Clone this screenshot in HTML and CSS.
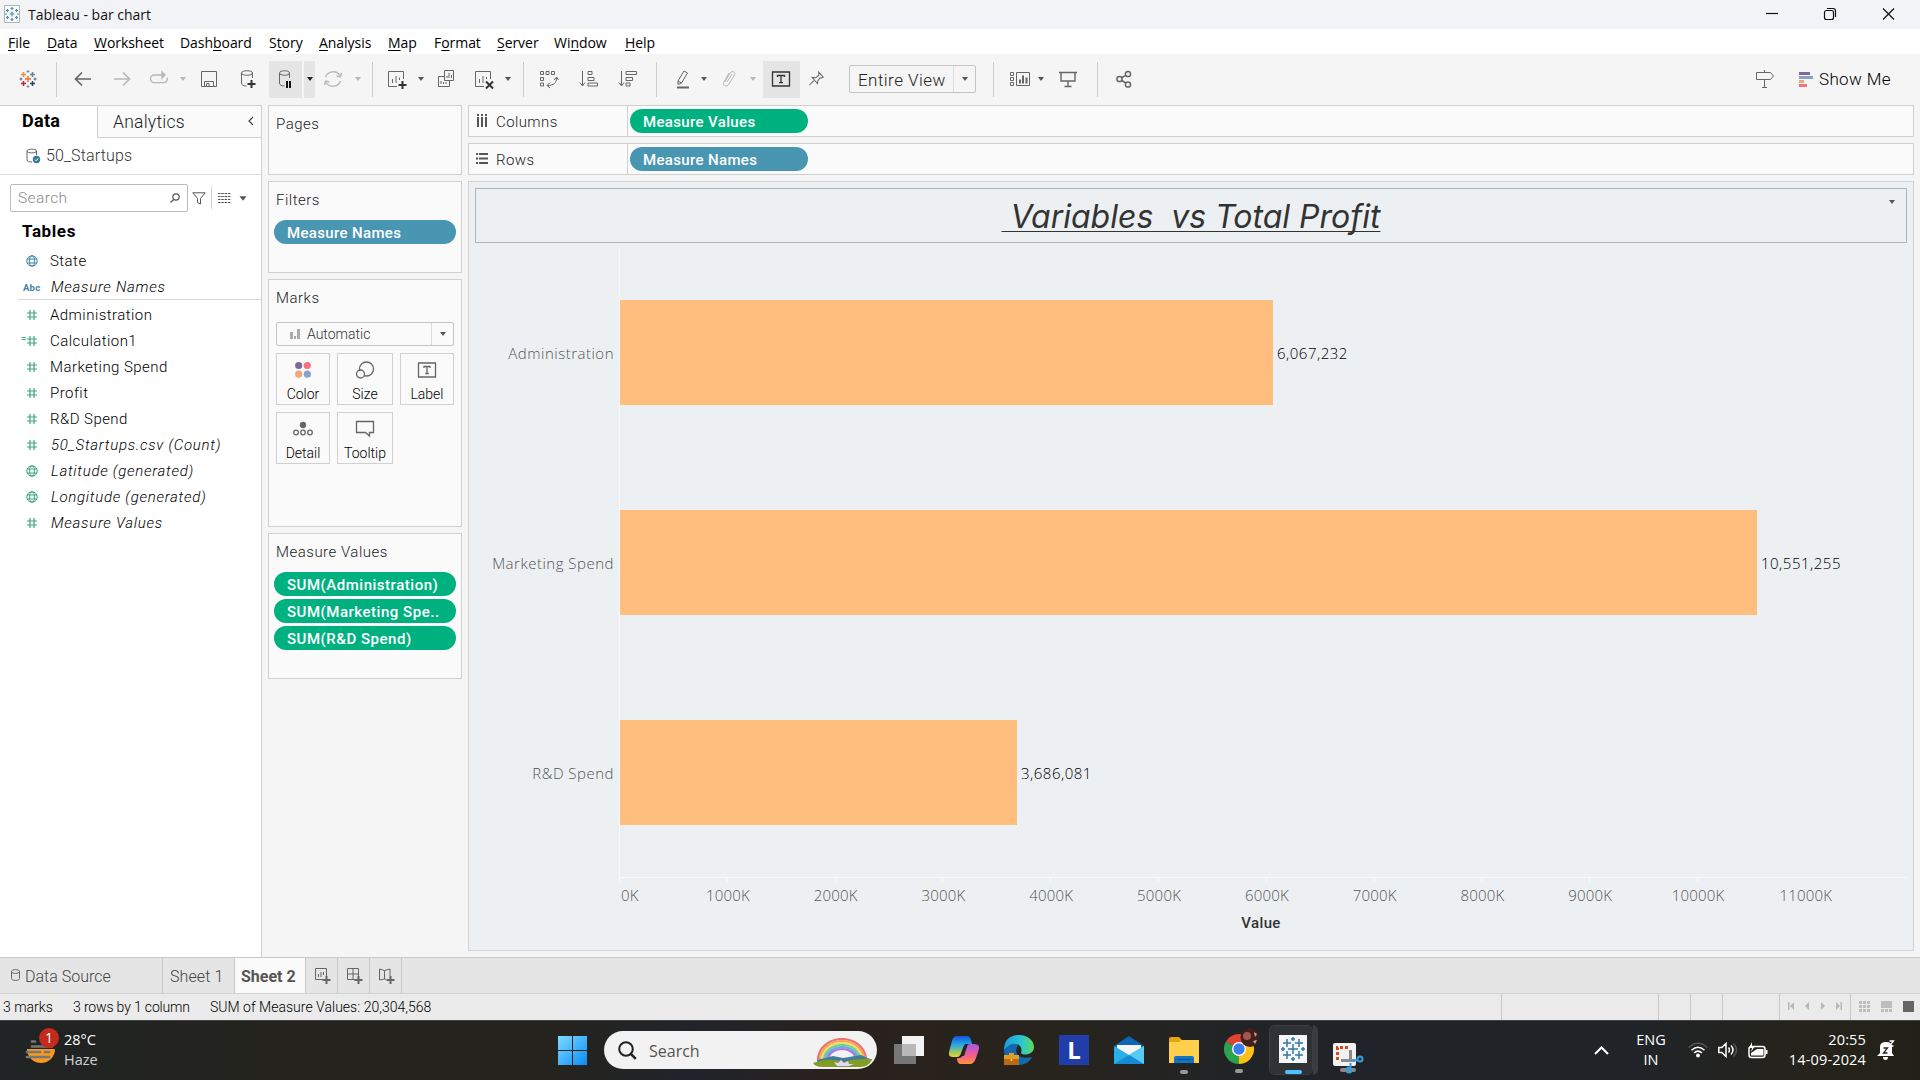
FILE: index.html
```html
<!DOCTYPE html>
<html lang="en">
<head>
<meta charset="utf-8">
<title>Tableau - bar chart</title>
<link rel="stylesheet" href="styles.css">
</head>
<body>
<svg width="0" height="0" class="defs">
  <defs>
    <symbol id="hash" viewBox="0 0 12 12"><path d="M1 4h10M1 8h10M4 1v10M8 1v10" stroke="currentColor" stroke-width="1.2" fill="none"/></symbol>
    <symbol id="globe" viewBox="0 0 12 12"><g stroke="currentColor" fill="none"><circle cx="6" cy="6" r="5.2"/><ellipse cx="6" cy="6" rx="2.4" ry="5.2"/><path d="M1 4h10M1 8h10"/></g></symbol>
    <symbol id="caret" viewBox="0 0 8 6"><path d="M1 1h6L4 5z" fill="currentColor"/></symbol>
  </defs>
</svg>

<header class="titlebar">
  <svg class="app-icon" width="16" height="18" viewBox="0 0 16 18"><path fill="#f8f8f8" stroke="#b5b5b5" d="M.5.5h15v17H.5z"/><path stroke="#4a8fb8" stroke-width="1.2" d="M8 6.500v5M5.500 9h5M8 2v3M6.500 3.500h3M8 13v3M6.500 14.500h3M3.500 4v3M2 5.500h3M12.500 4v3M11 5.500h3M3.500 11v3M2 12.500h3M12.500 11v3M11 12.500h3M1 9h2M13 9h2"/></svg>
  <span class="app-title">Tableau - bar chart</span>
  <svg class="controls" width="130" height="14" viewBox="0 0 130 14" fill="none" stroke="#111" stroke-width="1.2"><path d="M1 6.500h12"/><rect x="59.500" y="3.500" width="9" height="9" rx="2"/><path d="M62 1.500h6q2.500 0 2.500 2.500v6"/><path d="M118 1.500l11 11M129 1.500l-11 11"/></svg>
</header>

<nav class="menubar">
  <span class="m1"><u>F</u>ile</span><span class="m2"><u>D</u>ata</span><span class="m3"><u>W</u>orksheet</span><span class="m4">Dash<u>b</u>oard</span><span class="m5">S<u>t</u>ory</span><span class="m6"><u>A</u>nalysis</span><span class="m7"><u>M</u>ap</span><span class="m8">F<u>o</u>rmat</span><span class="m9"><u>S</u>erver</span><span class="m10">Wi<u>n</u>dow</span><span class="m11"><u>H</u>elp</span>
</nav>

<div class="toolbar">
  <svg class="ic" viewBox="0 0 20 20" stroke-width="1.5"><path stroke="#e8762c" d="M10 7v6M7 10h6"/><path stroke="#eb912c" d="M5.500 3v5M3 5.500h5"/><path stroke="#c72037" d="M5.500 12v5M3 14.500h5"/><path stroke="#59879b" d="M14.500 3v5M12 5.500h5"/><path stroke="#1f457e" d="M14.500 12v5M12 14.500h5"/><path stroke="#7199a6" stroke-width="1" d="M10 1v3M8.500 2.500h3M10 16v3M8.500 17.500h3"/><path stroke="#5b6591" stroke-width="1" d="M3 8.500v3M1.500 10h3M17 8.500v3M15.500 10h3"/></svg>
  <i class="sep g18"></i>
  <svg class="ic g16" viewBox="0 0 20 20" stroke-width="1.700"><path d="M18 10H3M9 3.500L2.500 10l6.500 6.500"/></svg>
  <svg class="ic dim g19" viewBox="0 0 20 20" stroke-width="1.700"><path d="M2 10h15M11 3.500l6.500 6.500-6.500 6.500"/></svg>
  <svg class="ic dim g17" viewBox="0 0 20 20" stroke-width="1.400"><path d="M14 6H5a3.500 3.800 0 0 0 0 7.600h10a3.500 3.500 0 0 0 3-5"/><path d="M13 3l3 3-3 3z" fill="#b8b8b8"/></svg>
  <svg class="caret dim g10"><use href="#caret"/></svg>
  <svg class="ic g12" viewBox="0 0 20 20"><path d="M2.500 2.500h15v15h-15zM5.500 17.500v-5h9v5M7.500 17.500v-3h2.500v3"/></svg>
  <svg class="ic g19" viewBox="0 0 20 20"><path d="M14.500 9V4c0-3-11-3-11 0v10c0 2 2 3 5 3M3.500 4c0 3 11 3 11 0"/><path stroke="#333" stroke-width="2" d="M13.500 11v8M9.500 15h8"/></svg>
  <span class="pressed wide g11"><svg class="ic" viewBox="0 0 20 20"><path d="M14.500 9V4c0-3-10-3-10 0v10c0 2 2 3 5 3M4.500 4c0 3 10 3 10 0"/><path stroke="#111" stroke-width="2" d="M12 12v7M15 12v7"/></svg></span>
  <span class="pressed thin g2"><svg class="caret dark"><use href="#caret"/></svg></span>
  <svg class="ic dim g8" viewBox="0 0 20 20" stroke-width="1.400"><path d="M2.500 8A8 7.500 0 0 1 17 6.500M17.500 12A8 7.500 0 0 1 3 13.500M18.500 4l-1 4-4-1M1.500 16l1-4 4 1"/></svg>
  <svg class="caret dim g11"><use href="#caret"/></svg>
  <i class="sep g10"></i>
  <svg class="ic g14" viewBox="0 0 20 20"><path d="M10 17.500H1.500v-15h15V10M5.500 14v-4M9 14V7M12.500 11V8.500" /><path stroke="#333" stroke-width="2" d="M15.500 12v8M11.500 16h8"/></svg>
  <svg class="caret g10"><use href="#caret"/></svg>
  <svg class="ic g11" viewBox="0 0 20 20"><path d="M8.500 1.500h9v10h-9zM8.500 7.500h-6v10h11v-6M11 9V7M13 9V4M15.500 9V6M5 15v-3M7.500 15v-2M10 15v-2"/></svg>
  <svg class="ic g18" viewBox="0 0 20 20"><path d="M10 17.500H1.500v-15h15V10M5.500 14v-4M9 14V7M12.500 10V8"/><path stroke="#333" stroke-width="2" d="M12 12.500l7 7M19 12.500l-7 7"/></svg>
  <svg class="caret g10"><use href="#caret"/></svg>
  <i class="sep g11"></i>
  <svg class="ic g15" viewBox="0 0 20 20"><path d="M1.500 2.500h3v3h-3zM7 2.500h3v3H7zM12.500 2.500h3v3h-3zM1.500 8.500h3v3h-3zM1.500 14h3v3h-3zM17.500 9c0 5-3 7.500-9 7.500M15 11l2.500-3 2 3M11 13.500l-3 3 3 2.500"/></svg>
  <svg class="ic g20" viewBox="0 0 20 20"><path d="M3.500 2v14M1 13.500l2.500 3.500 2.500-3.500M9 2.500h4v3H9zM9 8.500h6v3H9zM9 14h9.500v3H9z"/></svg>
  <svg class="ic g19" viewBox="0 0 20 20"><path d="M3.500 2v14M1 13.500l2.500 3.500 2.500-3.500M8 2.500h10.500v3H8zM8 8.500h6.500v3H8zM8 14h4v3H8z"/></svg>
  <i class="sep g18"></i>
  <svg class="ic g16" viewBox="0 0 20 20"><path d="M5 12L11 2l3.500 2-6 10-3.500 1.500zM5 12l3.500 2"/><path stroke-width="2" d="M4 18.500h12"/></svg>
  <svg class="caret g7"><use href="#caret"/></svg>
  <svg class="ic dim g11" viewBox="0 0 20 20"><path d="M6 13l5-9c2-3 6-1 4.500 2L10 15c-2 4-7 2-5-2l5-9M8 13l5-8"/></svg>
  <svg class="caret dim g10"><use href="#caret"/></svg>
  <span class="pressed text g6"><svg class="ic" viewBox="0 0 20 20"><path stroke="#333" stroke-width="1.300" d="M1.500 3h17v14h-17zM6.500 8V6.500h7V8M10 6.500v7M8 13.700h4"/></svg></span>
  <svg class="ic g7" viewBox="0 0 20 20"><path d="M11 3l5 4.500-1.500 1-1.500 0-2 3 0 3-6-5.500 3.500 0 3-3zM7 12l-4 5" transform="rotate(6 10 10)"/></svg>
  <div class="fit g22"><span>Entire View</span><b><svg class="caret"><use href="#caret"/></svg></b></div>
  <i class="sep g17"></i>
  <svg class="ic g16" viewBox="0 0 20 20"><path d="M.5 3.500h3v3h-3zM.5 8.500h3v3h-3zM.5 13.500h3v3h-3zM6.500 3.500h13v13h-13z"/><path stroke-width="2" d="M10 14.500v-4M13 14.500v-8M16.500 14.500v-6"/></svg>
  <svg class="caret g7"><use href="#caret"/></svg>
  <svg class="ic g13" viewBox="0 0 20 20"><path stroke-width="1.400" d="M1 3.500h18M3 3.500v8.500h14V3.500M10 12v5.500M6.500 17.500h7"/></svg>
  <i class="sep g19"></i>
  <svg class="ic g16" viewBox="0 0 20 20" stroke-width="1.500"><circle cx="5.500" cy="10" r="2.600"/><circle cx="14" cy="5" r="2.600"/><circle cx="14" cy="15.500" r="2.600"/><path d="M7.800 8.700L11.700 6.300M7.800 11.500l4 2.500"/></svg>
  <svg class="ic sign" viewBox="0 0 20 20"><path d="M9.500 1v2M9.500 10.500V18M7 18.500h5M1.500 3.500h14l3 3.500-3 3.500h-14z"/></svg>
  <svg class="showicon" width="14" height="15"><path fill="#806a95" d="M0 0h11v3H0z"/><path fill="#85a4cc" d="M0 4h14v3H0z"/><path fill="#f1a67c" d="M0 8h5v3H0z"/><path fill="#f8717f" d="M0 12h8v3H0z"/></svg>
  <span class="showme">Show Me</span>
</div>

<main class="work">
  <aside class="data">
    <div class="tabs"><strong>Data</strong><div class="analytics"><span>Analytics</span><svg width="6" height="10" viewBox="0 0 6 10"><path d="M5 1L1 5l4 4" fill="none" stroke="#444" stroke-width="1.200"/></svg></div></div>
    <div class="source">
      <svg width="15" height="16" viewBox="0 0 15 16" fill="none" stroke="#666"><path d="M10.500 7V3c0-2.500-9.500-2.500-9.500 0v9c0 1.500 2 2 5 2M1 3c0 2.500 9.500 2.500 9.500 0"/><circle cx="10.500" cy="11.500" r="3.700" fill="#33779c" stroke="none"/><path stroke="#fff" d="M8.800 11.500l1.300 1.300 2.300-2.600"/></svg>
      <span>50_Startups</span>
    </div>
    <div class="searchrow">
      <div class="search"><span>Search</span><svg width="10" height="10" viewBox="0 0 10 10" fill="none" stroke="#555" stroke-width="1.200"><circle cx="6" cy="4" r="3.200"/><path d="M3.700 6.500L.5 9.500"/></svg></div>
      <svg class="funnel" width="14" height="13" viewBox="0 0 14 13" fill="none" stroke="#555"><path d="M.8.800h12.400L8.500 6.500v5.500l-3-1.500v-4z"/></svg>
      <i></i>
      <svg width="13" height="10"><path d="M0 .5h13M0 3.500h13M0 6.500h13M0 9.500h13" stroke="#555" stroke-dasharray="2.500 .8"/></svg>
      <svg class="caret"><use href="#caret"/></svg>
    </div>
    <h2>Tables</h2>
    <ul class="fields dims">
      <li><svg><use href="#globe"/></svg>State</li>
      <li class="it"><em class="abc">Abc</em>Measure Names</li>
    </ul>
    <ul class="fields meas">
      <li><svg><use href="#hash"/></svg>Administration</li>
      <li><em class="calc">=</em><svg><use href="#hash"/></svg>Calculation1</li>
      <li><svg><use href="#hash"/></svg>Marketing Spend</li>
      <li><svg><use href="#hash"/></svg>Profit</li>
      <li><svg><use href="#hash"/></svg>R&amp;D Spend</li>
      <li class="it"><svg><use href="#hash"/></svg>50_Startups.csv (Count)</li>
      <li class="it"><svg><use href="#globe"/></svg>Latitude (generated)</li>
      <li class="it"><svg><use href="#globe"/></svg>Longitude (generated)</li>
      <li class="it"><svg><use href="#hash"/></svg>Measure Values</li>
    </ul>
  </aside>

  <section class="cards">
    <div class="card pages"><h3>Pages</h3></div>
    <div class="card filters"><h3>Filters</h3><div class="pill blue">Measure Names</div></div>
    <div class="card marks"><h3>Marks</h3>
      <div class="marktype"><svg width="11" height="11"><path fill="#aaa" d="M0 3h3v7H0zM4 7h2v3H4zM7 0h3v10H7z"/></svg><span>Automatic</span><b><svg class="caret"><use href="#caret"/></svg></b></div>
      <div class="markgrid">
        <div><svg width="20" height="20"><circle cx="5.700" cy="5.500" r="3.600" fill="#806a95"/><circle cx="14.300" cy="5.500" r="3.600" fill="#f8717f"/><circle cx="5.700" cy="14.200" r="3.600" fill="#f1a67c"/><circle cx="14.300" cy="14.200" r="3.600" fill="#85a4cc"/></svg>Color</div>
        <div><svg width="20" height="20" fill="none" stroke="#666" stroke-width="1.300"><circle cx="11.500" cy="9" r="7"/><circle cx="5.500" cy="14" r="4" fill="#fafafa"/></svg>Size</div>
        <div><svg width="20" height="20" fill="none" stroke="#666" stroke-width="1.300"><path d="M1.500 3h17v14h-17zM7 8V6.500h6V8M10 6.500v7M8.300 13.500h3.400"/></svg>Label</div>
        <div><svg width="20" height="20" fill="none" stroke="#666" stroke-width="1.300"><circle cx="10" cy="6" r="2.500" fill="#666"/><circle cx="3" cy="13.500" r="2.300"/><circle cx="10" cy="13.500" r="2.300"/><circle cx="17" cy="13.500" r="2.300"/></svg>Detail</div>
        <div><svg width="20" height="20" fill="none" stroke="#666" stroke-width="1.300"><path d="M1.500 2.500h17v11h-4V17l-4-3.500h-9z"/></svg>Tooltip</div>
      </div>
    </div>
    <div class="card values"><h3>Measure Values</h3><div class="pill green">SUM(Administration)</div><div class="pill green">SUM(Marketing Spe..</div><div class="pill green">SUM(R&amp;D Spend)</div></div>
  </section>

  <section class="canvas">
    <div class="shelf"><label><svg width="12" height="13"><path d="M2 0v13M6 0v13M10 0v13" stroke="#555" stroke-width="2" stroke-dasharray="2 1 10"/></svg>Columns</label><div class="pill green cols">Measure Values</div></div>
    <div class="shelf"><label><svg width="12" height="13"><path d="M0 2h12M0 6.500h12M0 11h12" stroke="#555" stroke-width="2" stroke-dasharray="2 1 10"/></svg>Rows</label><div class="pill blue cols">Measure Names</div></div>
    <div class="view">
      <div class="viewtitle"><h1>&nbsp;Variables&nbsp; vs Total Profit</h1><svg class="caret titlecaret"><use href="#caret"/></svg></div>
      <div class="chart">
        <div class="bandlabels"><span>Administration</span><span>Marketing Spend</span><span>R&amp;D Spend</span></div>
        <div class="bands">
          <div class="band"><i style="width:653px"></i><span>6,067,232</span></div>
          <div class="band"><i style="width:1137px"></i><span>10,551,255</span></div>
          <div class="band"><i style="width:397px"></i><span>3,686,081</span></div>
        </div>
      </div>
      <div class="axis"><span class="zero">0K</span><span>1000K</span><span>2000K</span><span>3000K</span><span>4000K</span><span>5000K</span><span>6000K</span><span>7000K</span><span>8000K</span><span>9000K</span><span>10000K</span><span>11000K</span></div>
      <div class="axistitle">Value</div>
    </div>
  </section>
</main>

<div class="sheets">
  <div class="tab ds"><svg width="9" height="12" viewBox="0 0 9 12" fill="none" stroke="#666"><path d="M.5 2.500c0-2.500 8-2.500 8 0v7c0 2.500-8 2.500-8 0zM.5 2.500c0 2.500 8 2.500 8 0"/></svg>Data Source</div>
  <div class="tab s1">Sheet 1</div>
  <div class="tab s2">Sheet 2</div>
  <div class="tab new"><svg width="16" height="16" fill="none" stroke="#666"><path d="M9 11.500H.5v-11h11V8M3.500 9V6M6 9V4M8.500 7V4"/><path stroke-width="2" d="M11.500 8v8M7.500 12h8"/></svg></div>
  <div class="tab new"><svg width="16" height="16" fill="none" stroke="#666"><path d="M8 11.500H.5v-11h11V8M6 .5v11M.5 6h11"/><path stroke-width="2" d="M11.500 8v8M7.500 12h8"/></svg></div>
  <div class="tab new"><svg width="16" height="16" fill="none" stroke="#666"><path d="M7 11.500l-1.500-.5-5 1V1l5 1.500L11 1v7M5.500 2.500V11"/><path stroke-width="2" d="M11.500 8v8M7.500 12h8"/></svg></div>
</div>
<div class="status">
  <span class="st1">3 marks</span><span class="st2">3 rows by 1 column</span><span class="st3">SUM of Measure Values: 20,304,568</span>
  <div class="cells"><i></i><i></i><i></i><i></i>
    <i class="navs"><svg width="56" height="8" fill="#b8b8b8"><path d="M1 0h1.500v8H1zM7 0v8L3 4zM22 0v8l-4-4zM34 0v8l4-4zM49 0v8l4-4zM53.500 0H55v8h-1.500z"/></svg></i>
    <i class="modes"><svg width="56" height="12" fill="#bdbdbd"><path d="M0 0h3v3H0zM4 0h3v3H4zM8 0h3v3H8zM0 4h3v3H0zM4 4h3v3H4zM8 4h3v3H8zM0 8h3v3H0zM4 8h3v3H4zM8 8h3v3H8zM22 0h11v7H22zM22 8h3v3h-3zM26 8h3v3h-3zM30 8h3v3h-3z"/><path fill="#666" d="M44 0h11v11H44z"/></svg></i>
  </div>
</div>

<footer class="taskbar">
  <div class="weather">
    <svg width="36" height="38" viewBox="0 0 36 38"><path fill="#f59a1c" d="M2 21h28a14 14 0 0 1-28 0z"/><path stroke="#777" stroke-width="2.700" stroke-linecap="round" d="M7 13.500h3M7 18.500h20M2 24h13M20 24h4M2 29h22"/><circle cx="24" cy="10" r="10" fill="#c42b1c"/><text x="24" y="15" text-anchor="middle" fill="#fff" font-size="14">1</text></svg>
    <div><b>28°C</b><span>Haze</span></div>
  </div>
  <svg class="win" width="29" height="29"><defs><linearGradient id="wg" x2="1" y2="1"><stop stop-color="#7ddcff"/><stop offset="1" stop-color="#0a8cf5"/></linearGradient></defs><path fill="url(#wg)" d="M0 0h14v14H0zM15 0h14v14H15zM0 15h14v14H0zM15 15h14v14H15z"/></svg>
  <div class="tsearch">
    <svg width="19" height="19" fill="none" stroke="#222" stroke-width="2"><circle cx="8" cy="8" r="6.800"/><path d="M12.800 12.800l5 5" stroke-width="2.500"/></svg><span>Search</span>
    <svg class="rainbow" width="59" height="30" fill="none" stroke-width="2.200"><path stroke="#ef7070" d="M5 22a24 21 0 0 1 48 0"/><path stroke="#f5a35c" d="M7 22a22 19 0 0 1 44 0"/><path stroke="#f0df65" d="M9 22a20 17 0 0 1 40 0"/><path stroke="#77ce8b" d="M11 22a18 15 0 0 1 36 0"/><path stroke="#68aee8" d="M13 22a16 13 0 0 1 32 0"/><path stroke="#a579db" d="M15 22a14 11 0 0 1 28 0"/><path fill="#447d9b" d="M4 22l16-4 10 2 18-3 11 5-7 6H5z"/><path fill="#829d26" d="M0 25q18-6 30-1 15-4 29-3-3 8-12 8H10q-8 0-10-4z"/><path fill="#e6d9f7" d="M21 24l4 1 3-3 3 3 4-2 1 3 5 0-5 2H24z"/></svg>
  </div>
  <svg class="tk tview" width="30" height="28"><path fill="#777" d="M0 8h22v20H0z"/><path fill="#f3f3f3" d="M8 0h22v20H8z"/><path fill="#b9b9b9" d="M8 8h14v12H8z"/></svg>
  <svg class="tk copilot" width="30" height="28"><defs><linearGradient id="ca" x2="0" y2="1"><stop stop-color="#1657d5"/><stop offset=".4" stop-color="#23a5e8"/><stop offset="1" stop-color="#e9d91c"/></linearGradient><linearGradient id="cb" x2="0" y2="1"><stop stop-color="#a556e8"/><stop offset=".6" stop-color="#f45f8b"/><stop offset="1" stop-color="#ff963b"/></linearGradient></defs><path fill="url(#ca)" d="M8 0h10q3 0 4 4l1 4h-5q-3 0-4 4l-2 5q-1 4-4 4H4q-5 0-4-5L3 5q1-5 5-5z"/><path fill="url(#cb)" d="M22 8h3q6 0 5 5l-3 9q-2 6-6 6H12q-4 0-4-6h2q3 0 4-4l2-6q1-4 6-4z"/><path fill="#27251e" d="M16 8h3l-4 12h-3z"/></svg>
  <svg class="tk edge" width="30" height="30"><defs><linearGradient id="eg"><stop stop-color="#1b9de2"/><stop offset=".6" stop-color="#2cc7cf"/><stop offset="1" stop-color="#61d957"/></linearGradient></defs><path fill="#1269b0" d="M0 15q4-11 14-6l-2 7q2 9 16 6-4 8-14 8Q0 30 0 15z"/><path fill="url(#eg)" d="M0 15C0 5 6 0 15 0s15 6 15 12c0 8-11 9-13 6 3-9-9-14-17-3z"/><path fill="#b86b12" d="M0 20h15v10H0z"/><path fill="#e79a25" d="M0 20h15v4H0zM5 18h5v2H5z"/><circle cx="7.500" cy="25" r="1" fill="#ffe36c"/></svg>
  <div class="tk lapp">L</div>
  <svg class="tk mail" width="30" height="28"><path fill="#0d65b5" d="M0 10L15 0l15 10v4H0z"/><path fill="#f4f4f4" d="M3 9h24v6L15 20 3 14z"/><path fill="#2aaee8" d="M0 10l15 9 15-9v18H0z"/><path fill="#56ccf5" d="M30 10v18L15 19z"/><path fill="#168bd4" d="M0 28l15-9 15 9z"/></svg>
  <svg class="tk folder" width="30" height="38"><path fill="#e5a50a" d="M0 3q0-2 2-2h8l3 3h14q3 0 3 3H0z"/><path fill="#ffd04b" d="M0 6h10l2-2h18v23H0z"/><path fill="#1474c4" d="M5 27v-5q0-2 2-2h16q2 0 2 2v5z"/><path stroke="#0b4b87" d="M8 23.500h14"/><rect x="11" y="34" width="8" height="4" rx="2" fill="#999"/></svg>
  <svg class="tk chrome" width="38" height="45"><path fill="#e34133" d="M15 21L2 13.500a15 15 0 0 1 26 0z"/><path fill="#fbc116" d="M15 21l13-7.500A15 15 0 0 1 15 36z"/><path fill="#2ea24d" d="M15 21v15A15 15 0 0 1 2 13.500z"/><circle cx="15" cy="21" r="7" fill="#fff"/><circle cx="15" cy="21" r="5.700" fill="#3a7ded"/><circle cx="26" cy="9.500" r="9.500" fill="#41201d"/><circle cx="23" cy="8" r="4" fill="#a4584d"/><path fill="#c9a79b" d="M30 4l3 2-2 3zM29 13l4-1-2 4z"/><rect x="11" y="41" width="8" height="4" rx="2" fill="#999"/></svg>
  <div class="tk active"><svg width="49" height="50"><path fill="#3a3d40" d="M44 0q5 1 5 6v38q0 5-5 6z"/><rect x=".5" y=".5" width="43" height="49" rx="5" fill="#2f3236" stroke="#3b3e42"/><path fill="#f6f6f6" d="M10 10h28v28H10z"/><path stroke="#3579a5" stroke-width="1.500" d="M24 19v10M19 24h10M18 14v8M14 18h8M30 14v8M26 18h8M18 26v8M14 30h8M30 26v8M26 30h8M24 12v4M22 14h4M24 32v4M22 34h4M14 22v4M12 24h4M34 22v4M32 24h4"/><rect x="16" y="45" width="17" height="4" rx="2" fill="#4cc2ff"/></svg></div>
  <svg class="tk snip" width="31" height="32"><rect width="23" height="23" rx="2" y="1" fill="#f1f1f1"/><path fill="none" stroke="#d34a1c" stroke-width="3" stroke-dasharray="3 2" d="M4.500 18V5.500H17"/><rect x="7" y="26" width="16" height="4" rx="2" fill="#888"/><path fill="none" stroke="#858b91" stroke-width="3" d="M17.500 8v12M8 18.500h14"/><g fill="none" stroke="#30a0e0" stroke-width="2"><circle cx="27" cy="17" r="2.500"/><circle cx="16" cy="28" r="2.500"/><path d="M17.500 25v-4M24 18l-4 1"/></g></svg>

  <div class="tray">
    <svg width="15" height="9" fill="none" stroke="#fff" stroke-width="2"><path d="M1 8l6.500-6.500L14 8"/></svg>
    <div class="lang">ENG<br>IN</div>
    <svg class="wifi" width="20" height="16" fill="none" stroke="#fff" stroke-width="1.500"><path stroke="#555" d="M.7 5.500q9.300-8.500 18.600 0"/><path d="M3.500 8.300q6.500-6 13 0M6 11q4-3.700 8 0"/><circle cx="10" cy="13.500" r="1.200" fill="#fff"/></svg>
    <svg class="vol" width="20" height="16" fill="none" stroke="#fff" stroke-width="1.500"><path d="M.8 5.500h3L8 1.500v13l-4.200-4h-3zM10.500 5.500q2 2.500 0 5M13 3.500q4 4.500 0 9"/><path stroke="#555" d="M15.500 1.500q6 6.500 0 13"/></svg>
    <svg class="bat" width="20" height="17" fill="none" stroke="#fff" stroke-width="1.500"><rect x="1" y="4.500" width="16" height="11" rx="2.500"/><path fill="#fff" d="M3 13.500V11l6-4h6.500v6.500zM4 0L1 6h3L3 10l4-6H4z" stroke="none"/><path stroke-width="2" d="M18.500 8v4"/></svg>
    <div class="clock">20:55<br>14-09-2024</div>
    <svg class="bell" width="18" height="20"><path fill="#fff" d="M3 7q0-5 6-5 6 0 6 5v6l2 3H0l3-3zM6 17h5q0 3-2.500 3T6 17z"/><path fill="none" stroke="#222" stroke-width="1.300" d="M6.500 8h4l-4 5h4"/><path fill="none" stroke="#fff" stroke-width="1.300" d="M12.500 1h4l-4 5h4"/></svg>
  </div>
</footer>
</body>
</html>
```
FILE: styles.css
```css
* { box-sizing: border-box; }
body { margin: 0; width: 1920px; height: 1080px; overflow: hidden; display: flex; flex-direction: column; font-family: Roboto, sans-serif; font-size: 15px; font-weight: 300; color: #222; background: #f5f5f5; }
.defs { position: absolute; }
h1, h2, h3, ul { margin: 0; padding: 0; font-weight: 300; list-style: none; }
svg { flex: none; display: block; }
i, em { font-style: normal; }
.caret { width: 8px; height: 6px; color: #555; }
.caret.dim { color: #b8b8b8; }
.caret.dark { color: #222; }

.titlebar { height: 29px; background: #f1f3f6; display: flex; align-items: center; padding: 0 25px 1px 4px; font-family: "Open Sans", sans-serif; font-size: 14px; font-weight: 400; color: #111; }
.app-title { margin-left: 8px; letter-spacing: 0; }
.controls { margin-left: auto; }

.menubar { height: 25px; background: #fff; display: flex; align-items: center; padding-top: 1px; font-family: "Open Sans", sans-serif; font-size: 14px; font-weight: 400; letter-spacing: -0.05px; color: #000; }
.menubar span { white-space: nowrap; }
.menubar u { text-underline-offset: 2px; }
.m1 { width: 39px; margin-left: 8px; } .m2 { width: 47px; } .m3 { width: 86px; } .m4 { width: 89px; } .m5 { width: 50px; } .m6 { width: 69px; } .m7 { width: 46px; } .m8 { width: 63px; } .m9 { width: 57px; } .m10 { width: 71px; }

.toolbar { height: 51px; display: flex; align-items: center; padding: 0 30px 1px 18px; }
.ic { width: 20px; height: 20px; fill: none; stroke: #666; }
.ic.dim { stroke: #b8b8b8; }
.sep { width: 1px; height: 35px; background: #cfcfcf; }
.g2 { margin-left: 2px; } .g6 { margin-left: 6px; } .g7 { margin-left: 7px; } .g8 { margin-left: 8px; }
.g10 { margin-left: 10px; } .g11 { margin-left: 11px; } .g12 { margin-left: 12px; } .g13 { margin-left: 13px; }
.g14 { margin-left: 14px; } .g15 { margin-left: 15px; } .g16 { margin-left: 16px; } .g17 { margin-left: 17px; }
.g18 { margin-left: 18px; } .g19 { margin-left: 19px; } .g20 { margin-left: 20px; } .g22 { margin-left: 22px; }
.pressed { height: 37px; background: #e5e5e5; display: flex; align-items: center; justify-content: center; }
.pressed .ic { margin-left: -1px; }
.wide { width: 33px; } .thin { width: 11px; } .text { width: 37px; }
.fit { width: 127px; height: 28px; border: 1px solid #c4c4c4; border-radius: 2px; display: flex; align-items: center; padding: 1px 0 0 8px; font-size: 17px; letter-spacing: 0.45px; color: #222; white-space: nowrap; }
.fit b { margin: -1px 0 0 auto; width: 22px; height: 26px; border-left: 1px solid #ddd; display: flex; align-items: center; justify-content: center; }
.sign { margin-left: auto; }
.showicon { margin-left: 24px; }
.showme { width: 71px; margin-left: 6px; font-size: 17px; letter-spacing: 0.35px; white-space: nowrap; color: #000; }

.work { height: 852px; display: flex; }
.data { width: 262px; background: #fff; border-top: 1px solid #d0d0d0; border-right: 1px solid #d0d0d0; }
.tabs { display: flex; height: 32px; }
.tabs strong { width: 97px; padding: 4px 0 0 22px; font-size: 18px; font-weight: 700; line-height: 22px; letter-spacing: 0.3px; color: #000; }
.analytics { flex: 1; border-left: 1px solid #d0d0d0; border-bottom: 1px solid #d0d0d0; background: #fafafa; display: flex; align-items: center; padding: 0 7px 0 15px; font-size: 17.500px; letter-spacing: 0.25px; }
.analytics svg { margin: -2px 0 0 auto; }
.source { height: 37px; border-bottom: 1px solid #ddd; display: flex; align-items: center; padding: 0 0 1px 26px; font-size: 16px; color: #333; }
.source span { margin-left: 5px; letter-spacing: 0.15px; }
.searchrow { display: flex; align-items: center; margin-top: 9px; height: 28px; padding-left: 10px; }
.search { width: 178px; height: 28px; border: 1px solid #bbb; border-radius: 2px; display: flex; align-items: center; justify-content: space-between; padding: 0 7px; color: #888; font-size: 15.500px; letter-spacing: 0.4px; }
.funnel { margin-left: 4px; }
.searchrow i { width: 1px; height: 22px; background: #d0d0d0; margin: 0 6px 0 5px; }
.searchrow .caret { margin-left: 7px; width: 10px; height: 7px; }
.data h2 { margin: 8px 0 0 22px; font-size: 17px; font-weight: 700; line-height: 22px; letter-spacing: 0.6px; color: #000; }
.fields li { height: 26px; display: grid; grid-template-columns: 17px 1fr; align-items: center; padding-left: 26px; column-gap: 7px; position: relative; letter-spacing: 0.45px; white-space: nowrap; color: #000; }
.fields li svg { width: 12px; height: 12px; color: #3aa67e; }
.dims { padding-top: 6px; height: 58px; border-bottom: 1px solid #d8d8d8; margin-left: 18px; }
.dims li { padding-left: 8px; }
.fields.dims li { padding-left: 8px; }
.fields.dims li svg { color: #3e84a6; }
.meas { padding-top: 2px; }
.fields .it { font-style: italic; letter-spacing: 0.72px; column-gap: 8px; }
.fields .abc { font-size: 9.500px; font-weight: 700; font-style: normal; letter-spacing: 0.2px; color: #3e84a6; margin-left: -3px; }
.calc { position: absolute; left: 21px; top: 6px; font-size: 9px; font-weight: 700; letter-spacing: 0; color: #3aa67e; }

.cards { width: 194px; margin: 0 6px; display: flex; flex-direction: column; gap: 6px; }
.card { border: 1px solid #d0d0d0; background: #fafafa; padding: 0 5px; }
.card h3 { margin: 8px 0 0 2px; font-size: 15px; line-height: 20px; letter-spacing: 0.5px; color: #222; }
.pages { height: 70px; } .filters { height: 92px; } .marks { height: 248px; } .values { height: 146px; }
.pill { height: 24px; border-radius: 12px; color: #fff; padding: 1px 0 0 13px; line-height: 24px; font-size: 15px; font-weight: 500; letter-spacing: 0.35px; margin-bottom: 3px; white-space: nowrap; }
.blue { background: #4996b2; } .green { background: #00b180; }
.filters .pill { margin-top: 10px; }
.values .pill { letter-spacing: 0.52px; }
.values .pill:nth-child(2) { margin-top: 10px; }
.marktype { width: 178px; height: 24px; margin: 14px 0 0 2px; border: 1px solid #c4c4c4; border-radius: 2px; display: flex; align-items: center; padding-left: 13px; font-size: 14px; color: #333; letter-spacing: 0; }
.marktype span { margin-left: 6px; }
.marktype b { margin-left: auto; width: 22px; height: 22px; border-left: 1px solid #ddd; display: flex; align-items: center; justify-content: center; }
.markgrid { display: grid; grid-template-columns: 54px 56px 54px; grid-auto-rows: 52px; gap: 7px; margin: 7px 0 0 2px; }
.markgrid div { border: 1px solid #d0d0d0; display: flex; flex-direction: column; align-items: center; padding-top: 6px; font-size: 14px; line-height: 17px; color: #000; }
.markgrid svg { margin-bottom: 6px; }

.canvas { width: 1446px; display: flex; flex-direction: column; gap: 6px; }
.shelf { height: 32px; border: 1px solid #d0d0d0; background: #fafafa; display: flex; }
.shelf label { width: 159px; border-right: 1px solid #d0d0d0; display: flex; align-items: center; gap: 8px; padding: 1px 0 0 7px; letter-spacing: 0.4px; color: #222; }
.shelf label svg { margin-top: -3px; }
.shelf .pill { width: 178px; margin: 3px 0 0 2px; }
.view { height: 770px; border: 1px solid #d0d4d7; background: #ecf0f3; padding: 6px; }
.viewtitle { height: 55px; border: 1px solid #b2b4b6; position: relative; text-align: center; }
.viewtitle h1 { font-family: Inter, sans-serif; font-size: 32px; font-weight: 400; font-style: italic; line-height: 40px; padding-top: 8px; letter-spacing: 0; color: #333; text-decoration: underline; text-decoration-thickness: 1px; text-underline-offset: 3px; text-decoration-skip-ink: none; }
.titlecaret { position: absolute; right: 10px; top: 10px; }
.chart { height: 630px; margin-top: 5px; display: flex; font-family: "Open Sans", sans-serif; }
.bandlabels { width: 145px; height: 630px; border-right: 1px solid #f6f8f9; display: grid; grid-template-rows: repeat(3, 210px); align-items: center; justify-items: end; padding: 0 5px 0 0; letter-spacing: 0.5px; color: #555; white-space: nowrap; }
.bands { height: 630px; flex: 1; border-bottom: 1px solid #f7f9fa; }
.band { height: 210px; display: flex; align-items: flex-start; padding-top: 52px; }
.band i { height: 105px; background: #ffbe7d; flex: none; }
.band span { margin-left: 4px; line-height: 106px; letter-spacing: 0.5px; color: #000; }
.axis { margin-left: 199px; position: relative; display: grid; grid-template-columns: repeat(11, 107.800px); height: 33px; align-items: center; font-family: "Open Sans", sans-serif; color: #555; letter-spacing: 0.2px; text-align: center; }
.axis::before { content: ""; position: absolute; left: -55px; top: 0; width: 1186px; height: 4px; background: repeating-linear-gradient(90deg, #f7f9fa 0 1px, transparent 1px 107.800px); }
.axis .zero { position: absolute; left: -53px; }
.axistitle { width: 1282px; margin: 0 0 0 145px; text-align: center; line-height: 24px; font-weight: 500; letter-spacing: 0.4px; color: #333; }

.sheets { height: 37px; background: #e5e5e5; border-top: 1px solid #c8c8c8; border-bottom: 1px solid #d2d2d2; display: flex; font-size: 16px; color: #444; }
.tab { border-right: 1px solid #c8c8c8; display: flex; align-items: center; white-space: nowrap; padding-top: 1px; }
.ds { width: 163px; padding-left: 11px; letter-spacing: 0; } .ds svg { margin: -3px 5px 0 0; }
.s1 { width: 72px; padding-left: 7px; letter-spacing: 0.1px; } .s2 { width: 71px; padding-left: 6px; background: #fafafa; font-weight: 700; color: #555; }
.new { width: 32px; padding: 0 0 0 9px; }

.status { height: 26px; background: #ebebeb; display: flex; align-items: center; font-size: 14px; color: #000; }
.status span { white-space: nowrap; }
.st1 { width: 70px; margin-left: 3px; } .st2 { width: 137px; letter-spacing: -0.15px; } .st3 { letter-spacing: 0.02px; }
.cells { margin-left: auto; height: 26px; display: grid; grid-template-columns: 157px 32px 32px 57px 71px 70px; }
.cells i { border-left: 1px solid #c8c8c8; }
.navs { padding: 8px 0 0 7px; } .modes { padding: 7px 0 0 8px; }

.taskbar { height: 60px; border-top: 1px solid #444; background: linear-gradient(90deg, #202424 0, #24231d 15%, #25231d 28%, #20242a 36%, #2a211d 44%, #27241d 55%, #202428 66%, #202428 85%, #25231b 94%, #222117 100%); display: flex; align-items: center; padding-bottom: 1px; color: #fff; font-family: "Open Sans", sans-serif; font-weight: 400; }
.weather { width: 531px; padding-left: 25px; display: flex; gap: 3px; font-size: 14.500px; line-height: 20px; }
.weather svg { margin-top: -2px; }
.weather div { display: flex; flex-direction: column; }
.weather b { font-weight: 400; } .weather span { color: #d0d0d0; }
.win { margin-left: 27px; }
.tsearch { width: 273px; height: 38px; margin-left: 17px; border-radius: 19px; background: #f2f2f2; display: flex; align-items: center; padding: 0 5px 0 14px; color: #555; font-size: 16px; }
.tsearch span { margin-left: 12px; padding-top: 1px; }
.rainbow { margin: 6px 0 0 auto; }
.tview { margin-left: 17px; } .copilot { margin-left: 25px; } .edge { margin-left: 25px; }
.lapp { width: 30px; height: 30px; margin-left: 25px; background: #203da9; font: 700 24px/30px "Open Sans", sans-serif; text-align: center; }
.mail { margin-left: 25px; } .folder { margin: 9px 0 0 25px; } .chrome { margin: 0 0 0 25px; }
.active { margin-left: 7px; } .snip { margin: 16px 0 0 15px; }
.tray { margin-left: auto; padding-right: 25px; display: flex; align-items: center; font-size: 14.500px; line-height: 20px; }
.lang { width: 34px; margin-left: 25px; text-align: center; }
.wifi { margin-left: 20px; } .vol { margin-left: 10px; } .bat { margin-left: 10px; }
.clock { width: 84px; margin-left: 14px; text-align: right; white-space: nowrap; letter-spacing: 0.15px; }
.bell { margin-left: 11px; }
```
